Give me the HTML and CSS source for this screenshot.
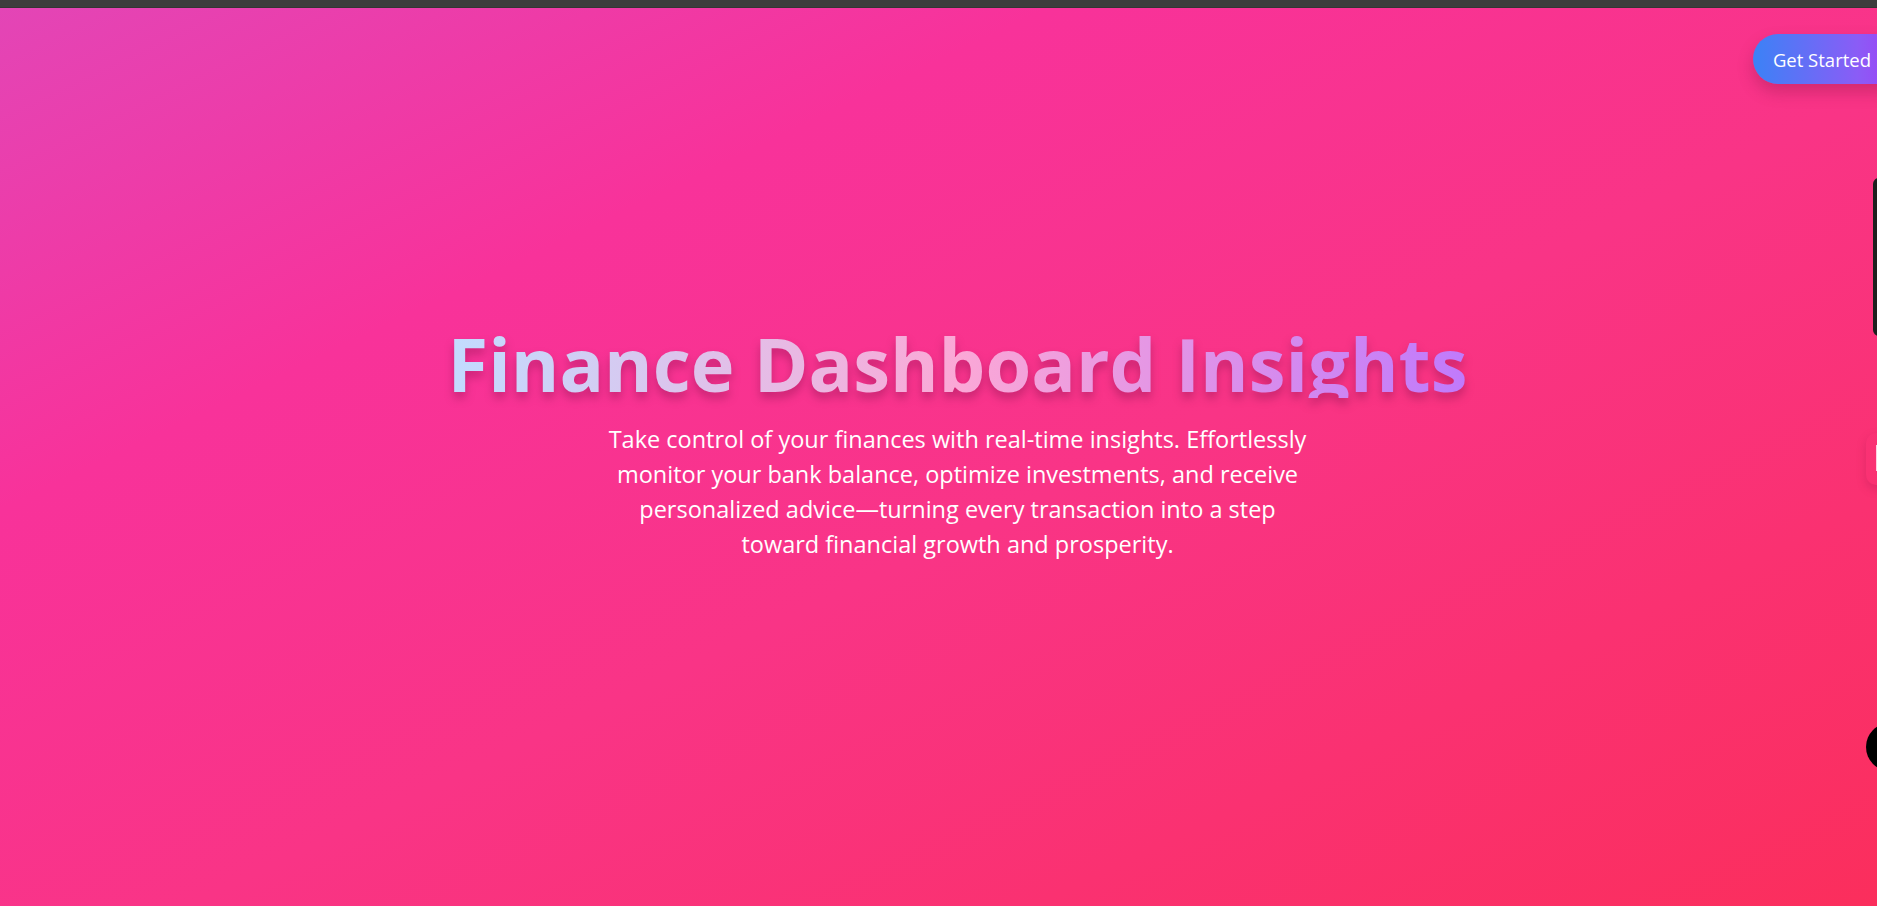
FILE: index.html
```html
<!DOCTYPE html>
<html lang="en">
<head>
<meta charset="utf-8">
<title>Finance Dashboard Insights</title>
<link rel="stylesheet" href="styles.css">
</head>
<body>
<div class="chrome-bar"></div>
<section class="hero">
  <header class="hero-header">
    <a class="cta" href="#">Get Started</a>
  </header>
  <main class="hero-main">
    <h1 class="hero-title">Finance Dashboard Insights</h1>
    <p class="hero-text">Take control of your finances with real-time insights. Effortlessly monitor your bank balance, optimize investments, and receive personalized advice—turning every transaction into a step toward financial growth and prosperity.</p>
  </main>
  <div class="peek peek-card"></div>
  <div class="peek peek-light"></div>
  <div class="peek peek-circle"></div>
</section>
</body>
</html>
```

FILE: styles.css
```css
html, body {
  margin: 0;
  padding: 0;
  height: 100%;
  overflow: hidden;
}
body {
  font-family: "Open Sans", "Noto Sans", sans-serif;
  background: #3c3c3c;
}
.chrome-bar {
  height: 8px;
  background: #3d3d3d;
  border-bottom: 1px solid #353535;
  box-sizing: border-box;
}
.hero {
  position: relative;
  height: 898px;
  background: linear-gradient(to bottom right, #e345b6 0%, #f8329a 28%, #f93486 55%, #fb2e5c 100%);
  display: flex;
  flex-direction: column;
  overflow: hidden;
}
.hero-header {
  display: flex;
  justify-content: flex-end;
  padding-top: 26px;
  margin-right: -26px;
}
.cta {
  display: inline-flex;
  align-items: center;
  height: 50px;
  padding: 0 32px 0 20px;
  border-radius: 25px;
  color: #fff;
  text-decoration: none;
  font-size: 18.5px;
  background: linear-gradient(to right, #3b82f6, #8b5cf6 70%, #a23cf5);
  box-shadow: 0 8px 16px rgba(120, 20, 60, 0.3);
}
.hero-main {
  display: flex;
  flex-direction: column;
  align-items: center;
  padding-top: 238px;
  padding-left: 38px;
}
.hero-title {
  margin: 0;
  font-size: 74px;
  font-weight: 700;
  line-height: 84px;
  height: 76px;
  background: linear-gradient(to right, #c2dcff, #fba8d6 50%, #c07afc);
  -webkit-background-clip: text;
  background-clip: text;
  color: transparent;
  filter: drop-shadow(0 6px 5px rgba(140, 20, 80, 0.45));
}
.hero-text {
  margin: 24px 0 0;
  max-width: 708px;
  text-align: center;
  color: #fff;
  font-size: 23.5px;
  line-height: 35px;
}
.peek {
  position: absolute;
}
.peek-card {
  left: 1873px;
  top: 170px;
  width: 60px;
  height: 158px;
  background: #1e1e1e;
  border-radius: 6px;
}
.peek-light {
  left: 1866px;
  top: 425px;
  width: 60px;
  height: 52px;
  border-radius: 10px;
  box-shadow: 0 4px 10px rgba(150, 20, 70, 0.25);
}
.peek-light::before {
  content: "";
  position: absolute;
  left: 10px;
  top: 12px;
  width: 2px;
  height: 26px;
  background: rgba(255, 235, 245, 0.85);
}
.peek-circle {
  left: 1866px;
  top: 715px;
  width: 48px;
  height: 48px;
  border-radius: 50%;
  background: #000;
}
```
